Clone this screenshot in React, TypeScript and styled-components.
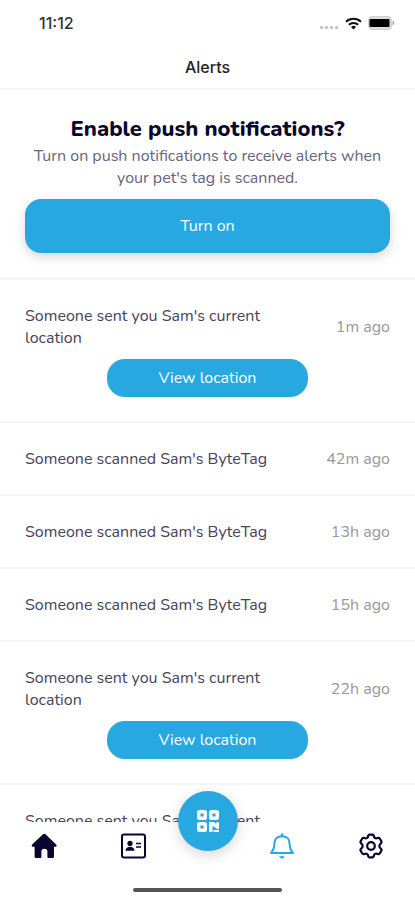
import React from "react";
import styled, { createGlobalStyle } from "styled-components";

const BLUE = "#27a8e0";
const NAVY = "#08052e";

const GlobalStyle = createGlobalStyle`
  *, *::before, *::after { box-sizing: border-box; }
  body {
    margin: 0;
    background: #fff;
    color: #45435a;
    font-family: Nunito, "Open Sans", "Noto Sans", sans-serif;
    font-size: 16px;
    line-height: 22px;
  }
  button { font: inherit; border: 0; cursor: pointer; }
`;

const Screen = styled.div`
  display: flex;
  flex-direction: column;
  height: 100vh;
  overflow: hidden;
`;

const StatusBar = styled.div`
  display: flex;
  align-items: center;
  justify-content: space-between;
  height: 46px;
  padding: 0 20px 0 39px;
  flex: none;
`;

const Clock = styled.time`
  color: #333;
  font: 500 16px/22px Inter, sans-serif;
`;

const StatusIcons = styled.div`
  display: flex;
  align-items: center;
  gap: 6px;
`;

const Header = styled.header`
  display: flex;
  align-items: center;
  justify-content: center;
  height: 44px;
  border-bottom: 2px solid #f6f6f6;
  flex: none;
`;

const Title = styled.h1`
  margin: 0;
  color: #222;
  font: 500 16px/22px Inter, sans-serif;
`;

const Content = styled.main`
  flex: 1;
  min-height: 0;
  overflow: hidden;
`;

const Prompt = styled.section`
  display: flex;
  flex-direction: column;
  padding: 25px 25px 24px;
  border-bottom: 3px solid #f6f6f6;
  text-align: center;
`;

const PromptTitle = styled.h2`
  margin: 0 0 2px;
  color: ${NAVY};
  font-size: 22px;
  font-weight: 800;
  line-height: 28px;
`;

const PromptText = styled.p`
  margin: 0 0 10px;
  color: #66647a;
`;

const ActionButton = styled.button<{ $large?: boolean }>`
  height: ${(p) => (p.$large ? 54 : 38)}px;
  width: ${(p) => (p.$large ? "100%" : "55%")};
  border-radius: ${(p) => (p.$large ? 16 : 18)}px;
  background: ${BLUE};
  color: #fff;
  box-shadow: ${(p) => (p.$large ? "0 4px 12px rgba(0, 0, 0, 0.16)" : "none")};
`;

const AlertList = styled.ul`
  margin: 0;
  padding: 0;
  list-style: none;
`;

const AlertRow = styled.li`
  display: flex;
  flex-direction: column;
  align-items: center;
  gap: 10px;
  padding: 25px 25px 24px;
  border-bottom: 2px solid #f5f5f5;
`;

const AlertLine = styled.div`
  display: flex;
  align-items: center;
  justify-content: space-between;
  width: 100%;
`;

const Message = styled.span`
  max-width: 260px;
`;

const Age = styled.time`
  color: #999;
  white-space: nowrap;
`;

const BottomBar = styled.footer`
  position: relative;
  display: flex;
  flex-direction: column;
  align-items: center;
  justify-content: space-between;
  height: 78px;
  padding: 10px 0 8px;
  background: #fff;
  flex: none;
`;

const Tabs = styled.nav`
  display: grid;
  grid-template-columns: repeat(2, 1fr) 60px repeat(2, 1fr);
  justify-items: center;
  width: 100%;
`;

const Tab = styled.a<{ $active?: boolean }>`
  display: flex;
  color: ${(p) => (p.$active ? BLUE : NAVY)};
`;

const ScanButton = styled.button`
  position: absolute;
  top: -31px;
  left: 50%;
  display: flex;
  align-items: center;
  justify-content: center;
  width: 60px;
  height: 60px;
  margin-left: -30px;
  padding: 0;
  border-radius: 50%;
  background: ${BLUE};
  color: #fff;
  box-shadow: 0 4px 14px rgba(0, 0, 0, 0.16);
`;

const HomeIndicator = styled.div`
  width: 36%;
  height: 4px;
  border-radius: 2px;
  background: #555;
`;

const SignalIcon = () => (
  <svg width="20" height="14" viewBox="0 0 20 14" fill="#c4c4c4" aria-hidden="true">
    <rect x="1" y="10" width="3" height="3" rx="1" />
    <rect x="6" y="10" width="3" height="3" rx="1" />
    <rect x="11" y="10" width="3" height="3" rx="1" />
    <rect x="16" y="10" width="3" height="3" rx="1" />
  </svg>
);

const WifiIcon = () => (
  <svg width="17" height="13" viewBox="0 0 17 13" fill="none" stroke="#111" strokeWidth="2" aria-hidden="true">
    <path d="M1 4.8a10.8 10.8 0 0 1 15 0" />
    <path d="M3.8 7.8a6.8 6.8 0 0 1 9.4 0" />
    <path d="M6 10a3.7 3.7 0 0 1 5 0L8.5 12.5Z" fill="#111" stroke="none" />
  </svg>
);

const BatteryIcon = () => (
  <svg width="27" height="14" viewBox="0 0 27 14" aria-hidden="true">
    <rect x="0.5" y="0.5" width="23" height="13" rx="3.5" fill="#ddd" stroke="#d0d0d0" />
    <rect x="1.500" y="3" width="20" height="8" rx="1" fill="#000" />
    <path d="M24.500 4.500c2.300 1.200 2.300 3.800 0 5z" fill="#aaa" />
  </svg>
);

const HomeIcon = () => (
  <svg width="28" height="28" viewBox="0 0 28 28" fill="currentColor" aria-hidden="true">
    <path d="M13 2.200c.8-.7 1.700-.7 2.500 0l10.600 10.200c1 1 .5 2.400-.8 2.400h-1.300v9.700c0 1-.6 1.600-1.600 1.600h-3.600c-.9 0-1.400-.5-1.400-1.400v-5.200c0-2-1-2.800-3-2.800s-3 .8-3 2.800v5.200c0 .9-.5 1.400-1.400 1.400H6.200c-1 0-1.600-.6-1.600-1.600v-9.700H3c-1.300 0-1.800-1.400-.8-2.400z" />
  </svg>
);

const CardIcon = () => (
  <svg width="28" height="28" viewBox="0 0 28 28" fill="none" stroke="currentColor" strokeWidth="2" aria-hidden="true">
    <rect x="3" y="2.500" width="23" height="23" rx="2" />
    <circle cx="11" cy="11.400" r="2.600" fill="currentColor" stroke="none" />
    <path d="M6.500 18.700c0-5.200 9-5.200 9 0z" fill="currentColor" stroke="none" />
    <path d="M17 11.500h5M17 15h5" strokeWidth="1.500" />
  </svg>
);

const BellIcon = () => (
  <svg width="28" height="28" viewBox="0 0 28 28" fill="none" stroke="currentColor" strokeWidth="2" strokeLinejoin="round" strokeLinecap="round" aria-hidden="true">
    <path d="M14 2.500v1.500" strokeWidth="2.500" />
    <path d="M14 4.200c-4.800 0-7.600 3.200-7.600 7.300 0 4.800-1 6.900-3.400 9.500h22c-2.400-2.600-3.400-4.700-3.400-9.500 0-4.100-2.800-7.300-7.600-7.300Z" />
    <path d="M11.800 24.500h4.400c-.4 2.400-4 2.400-4.400 0Z" fill="currentColor" strokeWidth="0.500" />
  </svg>
);

const GearIcon = () => (
  <svg width="28" height="28" viewBox="0 0 28 28" fill="none" stroke="currentColor" strokeWidth="2.200" strokeLinejoin="round" aria-hidden="true">
    <path d="M12.500 2.600h3q1 0 1.200 1l.4 1.400q.3.700 1 1.100t1.500.2l1.600-.4q1-.2 1.500.6l1.700 2.900q.5.900-.2 1.600l-1.200 1.200q-.6.700-.6 1.800t.6 1.800l1.200 1.200q.7.700.2 1.600l-1.700 2.900q-.5.800-1.500.6l-1.600-.4q-.8-.2-1.500.2t-1 1.100l-.4 1.400q-.2 1-1.200 1h-3q-1 0-1.200-1l-.4-1.400q-.3-.7-1-1.100t-1.500-.2l-1.600.4q-1 .2-1.500-.6l-1.700-2.900q-.5-.9.2-1.600L5 15.800q.6-.7.600-1.800T5 12.200L3.800 11q-.7-.7-.2-1.600l1.700-2.900q.5-.8 1.500-.6l1.600.4q.8.200 1.500-.2t1-1.100l.4-1.400q.2-1 1.200-1z" />
    <circle cx="14" cy="14" r="3.800" />
  </svg>
);

const QrIcon = () => (
  <svg width="24" height="24" viewBox="0 0 24 24" aria-hidden="true">
    <g fill="none" stroke="currentColor" strokeWidth="3.400">
      <rect x="2.700" y="2.700" width="6.600" height="6.600" rx="0.800" />
      <rect x="14.700" y="2.700" width="6.600" height="6.600" rx="0.800" />
      <rect x="2.700" y="14.700" width="6.600" height="6.600" rx="0.800" />
    </g>
    <path d="M13 13h5l1.500 1.500L21 13h2v7h-2l-3-2.500h-1.500V23H13zM17.500 21H23v2h-5.500z" fill="currentColor" />
  </svg>
);

type Alert = { text: string; age?: string; location?: boolean };

const alerts: Alert[] = [
  { text: "Someone sent you Sam's current location", age: "1m ago", location: true },
  { text: "Someone scanned Sam's ByteTag", age: "42m ago" },
  { text: "Someone scanned Sam's ByteTag", age: "13h ago" },
  { text: "Someone scanned Sam's ByteTag", age: "15h ago" },
  { text: "Someone sent you Sam's current location", age: "22h ago", location: true },
  { text: "Someone sent you Sam's current location" },
];

export default function App() {
  return (
    <Screen>
      <GlobalStyle />
      <StatusBar>
        <Clock>11:12</Clock>
        <StatusIcons>
          <SignalIcon />
          <WifiIcon />
          <BatteryIcon />
        </StatusIcons>
      </StatusBar>
      <Header>
        <Title>Alerts</Title>
      </Header>
      <Content>
        <Prompt>
          <PromptTitle>Enable push notifications?</PromptTitle>
          <PromptText>Turn on push notifications to receive alerts when your pet's tag is scanned.</PromptText>
          <ActionButton $large type="button">Turn on</ActionButton>
        </Prompt>
        <AlertList>
          {alerts.map((alert, i) => (
            <AlertRow key={i}>
              <AlertLine>
                <Message>{alert.text}</Message>
                {alert.age && <Age>{alert.age}</Age>}
              </AlertLine>
              {alert.location && <ActionButton type="button">View location</ActionButton>}
            </AlertRow>
          ))}
        </AlertList>
      </Content>
      <BottomBar>
        <Tabs aria-label="Main">
          <Tab href="#home" aria-label="Home"><HomeIcon /></Tab>
          <Tab href="#pets" aria-label="Pet profiles"><CardIcon /></Tab>
          <span />
          <Tab href="#alerts" aria-label="Alerts" aria-current="page" $active><BellIcon /></Tab>
          <Tab href="#settings" aria-label="Settings"><GearIcon /></Tab>
        </Tabs>
        <ScanButton type="button" aria-label="Scan tag"><QrIcon /></ScanButton>
        <HomeIndicator />
      </BottomBar>
    </Screen>
  );
}
